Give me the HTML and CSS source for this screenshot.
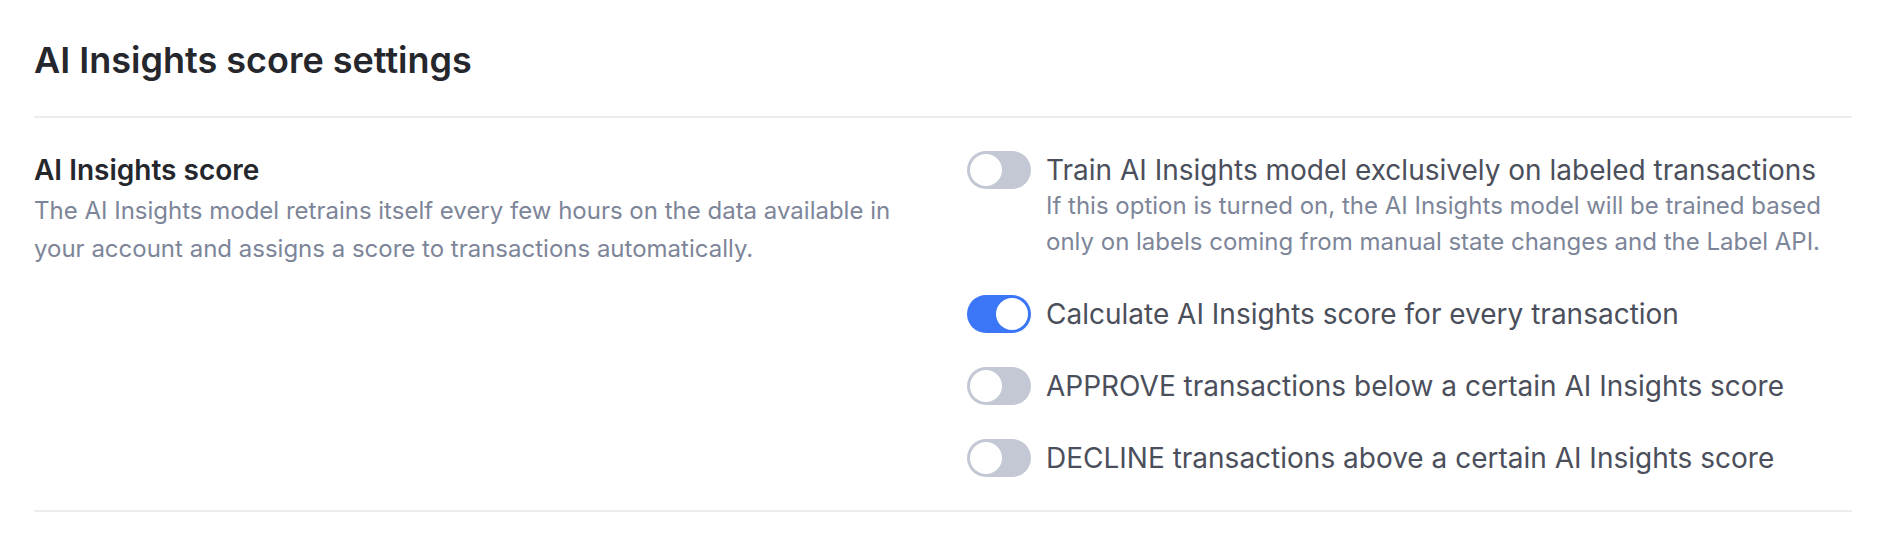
FILE: index.html
```html
<!DOCTYPE html>
<html>
<head>
<meta charset="utf-8">
<link rel="stylesheet" href="styles.css">
</head>
<body>
<div class="page">
  <h1 class="title">AI Insights score settings</h1>
  <div class="section">
    <div class="info">
      <h2 class="info-title">AI Insights score</h2>
      <p class="info-desc">The AI Insights model retrains itself every few hours on the data available in your account and assigns a score to transactions automatically.</p>
    </div>
    <div class="options">
      <div class="option">
        <span class="toggle"><span class="knob"></span></span>
        <div class="option-text">
          <div class="option-label">Train AI Insights model exclusively on labeled transactions</div>
          <div class="option-desc">If this option is turned on, the AI Insights model will be trained based only on labels coming from manual state changes and the Label API.</div>
        </div>
      </div>
      <div class="option">
        <span class="toggle on"><span class="knob"></span></span>
        <div class="option-text">
          <div class="option-label">Calculate AI Insights score for every transaction</div>
        </div>
      </div>
      <div class="option">
        <span class="toggle"><span class="knob"></span></span>
        <div class="option-text">
          <div class="option-label">APPROVE transactions below a certain AI Insights score</div>
        </div>
      </div>
      <div class="option">
        <span class="toggle"><span class="knob"></span></span>
        <div class="option-text">
          <div class="option-label">DECLINE transactions above a certain AI Insights score</div>
        </div>
      </div>
    </div>
  </div>
</div>
</body>
</html>
```

FILE: styles.css
```css
* { box-sizing: border-box; }
html, body { margin: 0; padding: 0; background: #ffffff; }
body { font-family: Inter, "Noto Sans", sans-serif; color: #2a2c33; }
.page { padding: 0 40px 0 34px; }
.title {
  margin: 0;
  height: 118px;
  padding-top: 38px;
  font-size: 36px;
  font-weight: 600;
  line-height: 44px;
  color: #25272d;
  border-bottom: 2px solid #ebecf0;
}
.section {
  display: grid;
  grid-template-columns: 1fr 1fr;
  column-gap: 48px;
  padding: 34px 0 34px;
  border-bottom: 2px solid #ebecf0;
}
.info-title {
  margin: 0;
  font-size: 28px;
  font-weight: 600;
  line-height: 36px;
  color: #25272d;
}
.info-desc {
  margin: 4px 0 0;
  font-size: 24px;
  line-height: 38px;
  color: #7d8599;
}
.options { display: flex; flex-direction: column; gap: 36px; }
.option { display: flex; align-items: flex-start; gap: 15px; }
.toggle {
  flex: none;
  width: 64px;
  height: 38px;
  margin: -1px 0;
  border-radius: 19px;
  background: #c3c8d4;
  display: flex;
  align-items: center;
  padding: 3px;
}
.toggle.on { background: #3b76f6; justify-content: flex-end; }
.knob { width: 32px; height: 32px; border-radius: 50%; background: #fff; }
.option-label { font-size: 28px; line-height: 36px; color: #4b4f5b; }
.option-desc { font-size: 24px; line-height: 36px; color: #7d8599; }
```
